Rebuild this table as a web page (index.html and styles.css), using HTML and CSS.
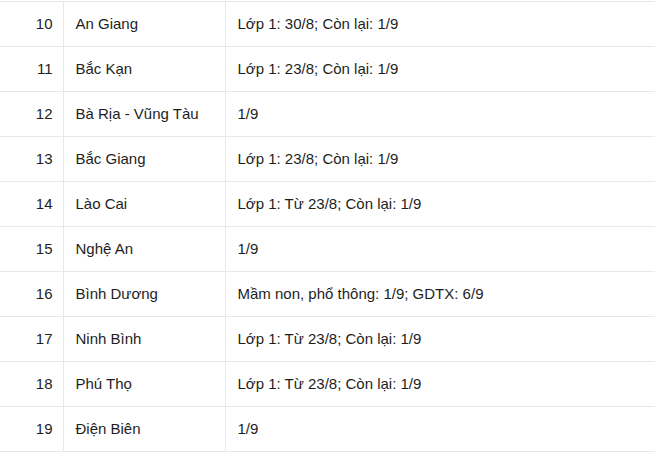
FILE: index.html
```html
<!DOCTYPE html>
<html lang="vi">
<head>
<meta charset="utf-8">
<link rel="stylesheet" href="styles.css">
</head>
<body>
<table class="grid">
  <colgroup><col class="c-num"><col class="c-name"><col class="c-date"></colgroup>
  <tbody>
    <tr><td class="num">10</td><td>An Giang</td><td>Lớp 1: 30/8; Còn lại: 1/9</td></tr>
    <tr><td class="num">11</td><td>Bắc Kạn</td><td>Lớp 1: 23/8; Còn lại: 1/9</td></tr>
    <tr><td class="num">12</td><td>Bà Rịa - Vũng Tàu</td><td>1/9</td></tr>
    <tr><td class="num">13</td><td>Bắc Giang</td><td>Lớp 1: 23/8; Còn lại: 1/9</td></tr>
    <tr><td class="num">14</td><td>Lào Cai</td><td>Lớp 1: Từ 23/8; Còn lại: 1/9</td></tr>
    <tr><td class="num">15</td><td>Nghệ An</td><td>1/9</td></tr>
    <tr><td class="num">16</td><td>Bình Dương</td><td>Mầm non, phổ thông: 1/9; GDTX: 6/9</td></tr>
    <tr><td class="num">17</td><td>Ninh Bình</td><td>Lớp 1: Từ 23/8; Còn lại: 1/9</td></tr>
    <tr><td class="num">18</td><td>Phú Thọ</td><td>Lớp 1: Từ 23/8; Còn lại: 1/9</td></tr>
    <tr><td class="num">19</td><td>Điện Biên</td><td>1/9</td></tr>
  </tbody>
</table>
</body>
</html>
```
FILE: styles.css
```css
html, body {
  margin: 0;
  padding: 0;
  background: #fff;
}
body {
  font-family: "Liberation Sans", Arial, Helvetica, sans-serif;
  font-size: 15px;
  color: #1e1e1e;
  overflow: hidden;
}
.grid {
  border-collapse: collapse;
  table-layout: fixed;
  width: 655px;
  margin-top: 1px;
}
.c-num { width: 63px; }
.c-name { width: 162px; }
.c-date { width: 430px; }
.grid td {
  height: 42px;
  padding: 0 12px 2px;
  border: 1px solid #e8e8e8;
  border-left: none;
  border-right: none;
  vertical-align: middle;
  white-space: nowrap;
}
.grid td + td {
  border-left: 1px solid #e8e8e8;
}
.grid td.num {
  text-align: right;
  padding-right: 10px;
}
```
